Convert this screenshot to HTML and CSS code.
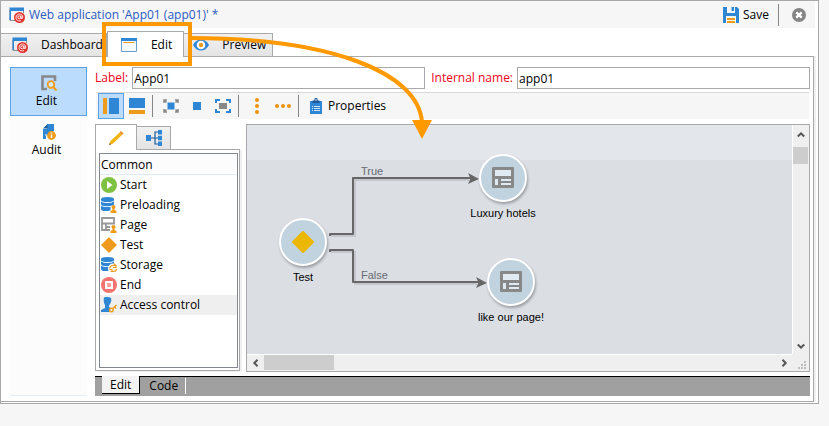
FILE: index.html
```html
<!DOCTYPE html>
<html lang="en">
<head>
<meta charset="utf-8">
<title>Web application</title>
<link rel="stylesheet" href="styles.css">
</head>
<body>
<svg class="defs" width="0" height="0" aria-hidden="true">
  <symbol id="i-webapp" viewBox="0 0 16 16">
    <path d="M1 3V13.500H6M14.500 4V6" fill="none" stroke="#8a8d92"/>
    <path d="M.5 .5H15V4H2V13H.5Z" fill="#2f86d4"/>
    <circle cx="10.500" cy="10.500" r="5.500" fill="#e2322d"/>
    <circle cx="10.300" cy="10.300" r="1.500" fill="none" stroke="#fff"/>
    <path d="M12 8.500V11.300Q13.700 12.300 13.800 10C13.600 6.200 7.400 5.900 7 10.300C6.800 13.500 10 14.600 12 13.400" fill="none" stroke="#fff" stroke-width=".9"/>
  </symbol>
  <symbol id="i-page" viewBox="0 0 24 24">
    <path fill-rule="evenodd" fill="#888" d="M2 1H22Q23 1 23 2V21Q23 22 22 22H2Q1 22 1 21V2Q1 1 2 1Z"/>
    <path fill="#dfeaf2" d="M4 4H20V10H4ZM4 13H7V19H4ZM10 13H20V15H10ZM10 17H20V19H10Z"/>
  </symbol>
  <symbol id="i-db" viewBox="0 0 16 16">
    <path fill="#2f86d4" d="M0 2Q0 0 6.500 0T13 2V3Q13 5 6.500 5T0 3ZM0 4.500Q2 6 6.500 6T13 4.500V7Q13 9 6.500 9.300Q0 9 0 7.200ZM0 8.700Q2 10.300 9.500 10V13.500Q0 15 0 12Z"/>
  </symbol>
  <symbol id="i-user" viewBox="0 0 7 8">
    <circle cx="3.500" cy="2" r="2" fill="#ee9b1c"/><path fill="#ee9b1c" d="M2.500 3H4.500V5L6.500 6V8H.5V6L2.500 5Z"/>
  </symbol>
</svg>

<div class="window">
  <header class="titlebar">
    <svg class="i16"><use href="#i-webapp"/></svg>
    <h1>Web application 'App01 (app01)' *</h1>
    <button class="save">
      <svg class="i16" viewBox="0 0 16 16"><path fill="#2f86d4" d="M0 0H4V6H12V0H14L16 2V16H13V9H3V16H0Z"/><path fill="#2f86d4" d="M8.500 0H11V4H8.500Z"/><path stroke="#ee9b1c" stroke-width="2" d="M4 12H12M4 15H12"/></svg>
      Save
    </button>
    <span class="sep"></span>
    <button class="close" aria-label="Close">
      <svg width="14" height="14" viewBox="0 0 14 14"><circle cx="7" cy="7" r="7" fill="#858585"/><path d="M4.300 4.300L9.700 9.700M9.700 4.300L4.300 9.700" stroke="#fff" stroke-width="2.400"/></svg>
    </button>
  </header>

  <nav class="tabs">
    <button class="tab"><svg class="i16"><use href="#i-webapp"/></svg>Dashboard</button>
    <button class="tab active"><svg class="i16" viewBox="0 0 16 16"><path d="M.5 1.500H15.500V14.500H.5Z" fill="#f8fbfe" stroke="#6a9fca"/><path d="M0 1H16V4H0Z" fill="#2f86d4"/><path d="M2.500 5.500H13.500" stroke="#ee9b1c"/></svg>Edit<span class="highlight"></span></button>
    <button class="tab preview"><svg class="i16" viewBox="0 0 16 16"><path d="M0 8Q3 2.500 8 2.500T16 8Q13 13.500 8 13.500T0 8Z" fill="#2f86d4"/><circle cx="8" cy="8" r="4.300" fill="#fff"/><circle cx="8" cy="8" r="2.200" fill="#ee9b1c"/></svg>Preview</button>
  </nav>

  <main class="page">
    <aside class="sidebar">
      <button class="side active">
        <svg class="i16" viewBox="0 0 16 16"><path d="M6 14H1.500V1.500H14V6" fill="none" stroke="#888" stroke-width="2.600"/><circle cx="10" cy="9.500" r="3.300" fill="#d5e8fa" stroke="#ee9b1c" stroke-width="1.800"/><path d="M12.300 12L15.500 15.500" stroke="#ee9b1c" stroke-width="2"/></svg>
        Edit
      </button>
      <button class="side">
        <svg class="i16" viewBox="0 0 16 16"><path d="M6 0H13V7L5 12V15H2V5H6Z" fill="#2f86d4"/><path d="M2 4.500L6.500 0V4.500Z" fill="#1b5b9d"/><path d="M4 11H6" stroke="#fff"/><circle cx="10.500" cy="11.500" r="4.400" fill="#ee9b1c"/><path d="M10.500 8.500V9.600M10.500 10.500V14" stroke="#fff" stroke-width="1.600"/></svg>
        Audit
      </button>
    </aside>

    <section class="main">
      <div class="fields">
        <label for="label">Label:</label><input id="label" value="App01">
        <label for="name">Internal name:</label><input id="name" value="app01">
      </div>

      <div class="toolbar">
        <button class="tool on" aria-label="Columns"><svg class="i16" viewBox="0 0 16 16"><path fill="#ee9b1c" d="M0 0H4V16H0Z"/><path fill="#2f86d4" d="M6 0H16V16H6Z"/></svg></button>
        <button class="tool" aria-label="Rows"><svg class="i16" viewBox="0 0 16 16"><path fill="#2f86d4" d="M0 0H16V10H0Z"/><path fill="#ee9b1c" d="M0 12H16V16H0Z"/></svg></button>
        <span class="sep"></span>
        <button class="tool" aria-label="Fit selection"><svg class="i16" viewBox="0 0 16 16"><path fill="#2f86d4" d="M4.500 4.500H11.500V11.500H4.500Z"/><path d="M1 5V2H4M12 2H15V5M15 11V14H12M4 14H1V11M1 2L3.500 4.500M15 2L12.500 4.500M1 14L3.500 11.500M15 14L12.500 11.500" fill="none" stroke="#888" stroke-width="1.500"/></svg></button>
        <button class="tool" aria-label="Actual size"><svg class="i16" viewBox="0 0 16 16"><path fill="#2f86d4" d="M4 4H12V12H4Z"/></svg></button>
        <button class="tool" aria-label="Zoom to page"><svg class="i16" viewBox="0 0 16 16"><path fill="#888" d="M4 5H12V11H4Z"/><path d="M1 5V2H5M11 2H15V5M15 11V14H11M5 14H1V11" fill="none" stroke="#2f86d4" stroke-width="2"/></svg></button>
        <span class="sep"></span>
        <button class="tool" aria-label="Align vertically"><svg class="i16" viewBox="0 0 16 16" fill="#ee920e"><circle cx="8" cy="2" r="2"/><circle cx="8" cy="8" r="2"/><circle cx="8" cy="14" r="2"/></svg></button>
        <button class="tool" aria-label="Align horizontally"><svg class="i16" viewBox="0 0 16 16" fill="#ee920e"><circle cx="2" cy="8" r="2"/><circle cx="8" cy="8" r="2"/><circle cx="14" cy="8" r="2"/></svg></button>
        <span class="sep"></span>
        <button class="props"><svg class="i16" viewBox="0 0 16 16"><path fill="#2f86d4" d="M2 3H14V16H2Z"/><path fill="#1b5b9d" d="M4.500 2.500H6L7 0H9L10 2.500H11.500V5H4.500Z"/><circle cx="8" cy="2" r=".8" fill="#fff"/><path d="M4 8.500H5M4 10.500H5M4 12.500H5M6 8.500H12M6 10.500H12M6 12.500H12" stroke="#cfe3f6"/></svg>Properties</button>
      </div>

      <div class="workspace">
        <div class="palette">
          <div class="ptabs">
            <button class="ptab active" aria-label="Activities"><svg class="i16" viewBox="0 0 16 16"><path d="M1 15L2.500 11L11.500 2.500L14 5L5 13.500Z" fill="#f0b40d"/><path d="M1 15L1.700 13L3 14.400Z" fill="#6a5535"/><path d="M11.500 2.500L13 1L15.500 3.500L14 5Z" fill="#e88b27"/></svg></button>
            <button class="ptab" aria-label="Structure"><svg class="i16" viewBox="0 0 16 16"><path d="M5 8H12M12 2H9V14H12" fill="none" stroke="#1b5b9d" stroke-width="1.200"/><path fill="#2f86d4" d="M0 5H5V11H0ZM12 0H16V4.500H12ZM12 5.800H16V10.200H12ZM12 11.500H16V16H12Z"/></svg></button>
          </div>
          <div class="pbody">
            <div class="plist">
              <h2>Common</h2>
              <button class="item"><svg class="i16" viewBox="0 0 16 16"><circle cx="8" cy="8" r="8" fill="#7fc241"/><path d="M6 4L11.500 8L6 12Z" fill="#fff"/></svg>Start</button>
              <button class="item"><svg class="i16" viewBox="0 0 16 16"><use href="#i-db" width="16" height="16"/><use href="#i-user" x="9" y="8" width="7" height="8"/></svg>Preloading</button>
              <button class="item"><svg class="i16" viewBox="0 0 16 16"><path d="M1 1H13V6.500H1ZM1 6.500V13H9M5 7V13M5 10H9" fill="none" stroke="#999" stroke-width="1.800"/><use href="#i-user" x="9" y="8" width="7" height="8"/></svg>Page</button>
              <button class="item"><svg class="i16" viewBox="0 0 16 16"><path d="M8 0L16 8L8 16L0 8Z" fill="#ee9b1c"/></svg>Test</button>
              <button class="item"><svg class="i16" viewBox="0 0 16 16"><use href="#i-db" width="16" height="16"/><circle cx="12" cy="11.500" r="5" fill="#fff"/><path d="M8.500 11.500Q9 8.500 12 8.500H14.500M12.500 6.500L15 8.500V10.500H12M15.500 12Q15 14.500 12 14.500H9.500M8.500 12.500H11V14.500" fill="none" stroke="#ee9b1c" stroke-width="1.200"/></svg>Storage</button>
              <button class="item"><svg class="i16" viewBox="0 0 16 16"><circle cx="8" cy="8" r="8" fill="#f7736f"/><path d="M5 5H11V11H5Z" fill="#f9a09d" stroke="#fff" stroke-width="2"/></svg>End</button>
              <button class="item selected"><svg class="i16" viewBox="0 0 16 16"><path fill="#2f86d4" d="M3 0.500Q7 -1 10 1Q11 4 9 7L8 9V10L9.500 11L8 15H0V13L4 11V8Q2 5 3 .5Z"/><circle cx="10.300" cy="13" r="1.800" fill="#efefef" stroke="#ee9b1c" stroke-width="1.400"/><path d="M11.500 11.800L15.500 8M13.500 10L15 11.500" stroke="#ee9b1c" stroke-width="1.500"/></svg>Access control</button>
            </div>
          </div>
        </div>

        <div class="diagram">
          <div class="canvas">
            <svg class="wires" width="545" height="229" viewBox="0 0 545 229">
              <g fill="none" stroke="#c3c6ca" stroke-width="2"><path d="M84 111H108V55H222M84 127H108V159H230"/></g>
              <g fill="none" stroke="#666" stroke-width="2" stroke-linejoin="round"><path d="M83 111V109H106V53H224M83 127V125H106V157H232"/></g>
              <path fill="#666" d="M221 48L232 54L221 59L223.500 53.500ZM229 152L240 158L229 163L231.500 157.500Z"/>
            </svg>
            <span class="wirelabel true">True</span>
            <span class="wirelabel false">False</span>
            <div class="node test"><span class="disc"><svg width="24" height="24" viewBox="0 0 24 24"><path d="M12 2L22 12L12 22L2 12Z" fill="#ecb700" stroke="#ecb700" stroke-width="2" stroke-linejoin="round"/></svg></span>Test</div>
            <div class="node luxury"><span class="disc"><svg width="24" height="24"><use href="#i-page"/></svg></span>Luxury hotels</div>
            <div class="node like"><span class="disc"><svg width="24" height="24"><use href="#i-page"/></svg></span>like our page!</div>
          </div>
          <div class="vscroll">
            <button aria-label="Scroll up"><svg width="8" height="8" viewBox="0 0 8 8"><path d="M.8 5.500L4 2.300L7.200 5.500"/></svg></button>
            <span class="thumb"></span>
            <button aria-label="Scroll down"><svg width="8" height="8" viewBox="0 0 8 8"><path d="M.8 2.500L4 5.700L7.200 2.500"/></svg></button>
          </div>
          <div class="hscroll">
            <button aria-label="Scroll left"><svg width="8" height="8" viewBox="0 0 8 8"><path d="M5.500 .8L2.300 4L5.500 7.200"/></svg></button>
            <span class="thumb"></span>
            <button aria-label="Scroll right"><svg width="8" height="8" viewBox="0 0 8 8"><path d="M2.500 .8L5.700 4L2.500 7.200"/></svg></button>
          </div>
          <div class="corner"><svg width="8" height="8" viewBox="0 0 8 8"><path fill="#bfbfbf" d="M6 0H8V2H6ZM3 3H5V5H3ZM6 3H8V5H6ZM0 6H2V8H0ZM3 6H5V8H3ZM6 6H8V8H6Z"/></svg></div>
        </div>
      </div>

      <div class="views">
        <button class="view active">Edit</button>
        <button class="view">Code</button>
      </div>
    </section>
  </main>
</div>

<svg class="pointer" width="260" height="110" viewBox="0 0 260 110" aria-hidden="true">
  <path d="M10 8C150 8 238 42 242 92" fill="none" stroke="#f90" stroke-width="4"/>
  <path d="M232 90H252L242 109Z" fill="#f90"/>
</svg>
</body>
</html>
```
FILE: styles.css
```css
* { box-sizing: border-box; }

body {
  margin: 0;
  height: 100vh;
  padding: 0 10px 22px 0;
  background: #f6f6f6;
  color: #000;
  font: 12px/16px "Open Sans", "Noto Sans", sans-serif;
}

button, input { font: inherit; color: inherit; }
button { display: flex; align-items: center; padding: 0; border: 0; background: none; white-space: nowrap; }
svg { display: block; flex: none; }
h1, h2 { margin: 0; font: inherit; }
.defs { position: absolute; }
.i16 { width: 16px; height: 16px; }
.sep { width: 1px; height: 22px; background: #858585; }

.window {
  display: flex;
  flex-direction: column;
  height: 100%;
  min-height: 404px;
  border: 1px solid #a9a9ab;
  background: #fff;
}

.titlebar {
  display: flex;
  align-items: center;
  height: 27px;
  margin-right: 3px;
  padding: 0 9px 0 8px;
  background: #f6f6f6;
}
.titlebar h1 { margin-left: 4px; color: #2c5bc0; }
.save { gap: 4px; margin: 0 9px 0 auto; }
.close { margin-left: 13px; }

.tabs { display: flex; align-items: flex-end; height: 28px; }
.tab {
  gap: 13px;
  height: 23px;
  padding: 0 3px 0 11px;
  border: 1px solid #a9a9ab;
  border-width: 1px 1px 0 0;
  background: linear-gradient(#f1f1f1, #e4e4e4);
}
.tab.active {
  position: relative;
  z-index: 1;
  height: 26px;
  margin-bottom: -1px;
  padding: 0 11px 0 13px;
  gap: 14px;
  border-left-width: 1px;
  background: #fff;
}
.tab.preview { gap: 13px; padding: 0 6px 0 9px; }
.highlight {
  position: absolute;
  inset: -10px -9px -9px -6px;
  border: 4px solid #f90;
}

.page {
  display: flex;
  gap: 8px;
  flex: 1;
  min-height: 0;
  margin: 0 4px 1px 0;
  padding: 10px 3px 5px 9px;
  border: 1px solid #a9a9ab;
  border-left: 0;
  box-shadow: 2px 0 #f0f0f0;
}

.sidebar { width: 77px; flex: none; background: #fcfcfc; border-bottom: 1px solid #e6eef6; }
.side {
  flex-direction: column;
  justify-content: center;
  gap: 2px;
  width: 100%;
  height: 49px;
  padding-right: 4px;
  border: 1px solid transparent;
}
.side svg { margin-left: 4px; }
.side.active { border-color: #5ba1e4; background: #bbdcfc; }

.main { display: flex; flex-direction: column; flex: 1; min-width: 0; }
.fields { display: flex; align-items: center; height: 22px; }
.fields label { color: #f00020; }
.fields input {
  flex: 1;
  min-width: 0;
  height: 22px;
  margin-left: 4px;
  padding: 0 1px;
  border: 1px solid #a9a9ab;
  background: #fff;
}
.fields input + label { margin-left: 6px; }

.toolbar {
  display: flex;
  align-items: center;
  height: 27px;
  margin: 3px 1px 5px;
  padding-left: 2px;
  border-top: 1px solid #d9d9d9;
  background: #f6f6f6;
}
.tool { justify-content: center; width: 26px; height: 26px; }
.tool.on { border: 1px solid #5ba1e4; background: #bbdcfc; }
.toolbar .sep { margin: 0 5px 0 2px; }
.props { gap: 4px; margin-left: 4px; }

.workspace { display: flex; gap: 6px; flex: 1; min-height: 0; }
.palette { display: flex; flex-direction: column; width: 145px; flex: none; }
.ptabs { display: flex; align-items: flex-end; height: 25px; }
.ptab {
  justify-content: center;
  width: 34px;
  height: 23px;
  border: 1px solid #a9a9ab;
  border-width: 1px 1px 0 0;
  background: linear-gradient(#f1f1f1, #e4e4e4);
}
.ptab.active {
  position: relative;
  width: 42px;
  height: 26px;
  margin-bottom: -1px;
  border-left-width: 1px;
  background: #fff;
}
.pbody { flex: 1; margin-bottom: 1px; padding: 3px 1px 2px 3px; border: 1px solid #a9a9ab; box-shadow: 2px 1px #f0f0f0; }
.plist { height: 100%; border: 1px solid #828790; }
.plist h2 { height: 21px; padding: 3px 0 0 1px; border-bottom: 1px solid #deebf7; background: #fcfcfc; }
.item { gap: 3px; width: 100%; height: 20px; padding-left: 1px; }
.item.selected { background: #efefef; }

.diagram {
  display: grid;
  grid-template: 1fr 17px / 1fr 17px;
  flex: 1;
  min-width: 0;
  border: 1px solid #a9a9ab;
  background: #efefef;
}
.canvas {
  position: relative;
  overflow: hidden;
  background: linear-gradient(#e3e7ec 35px, #dbdfe4 35px);
  font: 11px/14px "Liberation Sans", sans-serif;
}
.wires { position: absolute; left: 0; top: 0; }
.wirelabel { position: absolute; left: 114px; color: #666a70; }
.wirelabel.true { top: 39px; }
.wirelabel.false { top: 143px; }
.node {
  position: absolute;
  display: flex;
  flex-direction: column;
  align-items: center;
  gap: 4px;
  width: 100px;
}
.node.test { left: 6px; top: 93px; }
.node.luxury { left: 206px; top: 29px; }
.node.like { left: 214px; top: 133px; }
.disc {
  display: grid;
  place-items: center;
  width: 48px;
  height: 48px;
  border: 2px solid #fff;
  border-radius: 50%;
  background: #c1d3df;
  box-shadow: 1px 2px 3px rgba(0, 0, 0, .3);
}

.vscroll, .hscroll { display: flex; }
.vscroll { flex-direction: column; border-left: 1px solid #fff; }
.hscroll { border-top: 1px solid #fff; }
.vscroll button, .hscroll button { justify-content: center; width: 16px; height: 16px; }
.vscroll path, .hscroll path { fill: none; stroke: #555; stroke-width: 2; }
.vscroll button:first-child { height: 22px; padding-bottom: 3px; }
.hscroll button:first-child { width: 17px; }
.vscroll .thumb { width: 15px; height: 17px; background: #cdcdcd; }
.hscroll .thumb { width: 70px; height: 15px; background: #cdcdcd; }
.vscroll button:last-child { margin-top: auto; }
.hscroll button:last-child { margin-left: auto; }
.corner { display: flex; align-items: flex-end; justify-content: flex-end; padding: 0 3px 2px 0; }

.views {
  display: flex;
  height: 20px;
  margin-top: 4px;
  padding-left: 7px;
  border-top: 1px solid #000;
  background: #a0a0a0;
}
.view { height: 16px; margin-top: 1px; padding: 0 7px 0 9px; border-right: 1px solid #fff; }
.view.active { height: 18px; margin-top: -1px; padding: 0 8px; border: solid #000; border-width: 0 1px 1px 0; background: #f3f3f3; }

.pointer { position: absolute; left: 180px; top: 30px; pointer-events: none; }
```
